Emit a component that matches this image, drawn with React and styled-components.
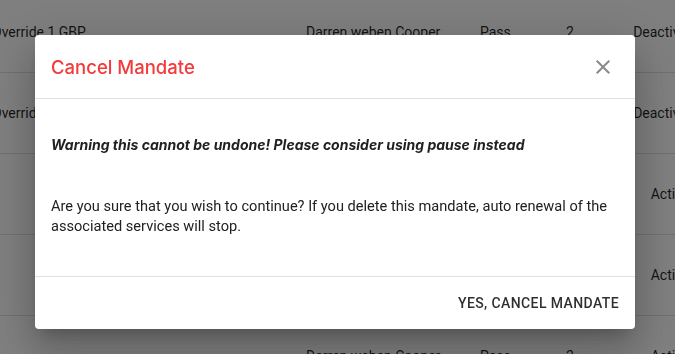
import React from "react";
import styled, { createGlobalStyle } from "styled-components";

const Global = createGlobalStyle`
  html, body {
    margin: 0;
    padding: 0;
    overflow: hidden;
    background: #fff;
  }
  body {
    width: 675px;
    height: 354px;
    font-family: Roboto, "Liberation Sans", sans-serif;
  }
`;

const Table = styled.div`
  margin: -8px 0 0 -8px;
  width: 740px;
`;

const Row = styled.div`
  display: grid;
  grid-template-columns: 314px 174px 86px 50px 108px;
  align-items: center;
  height: 80px;
  border-bottom: 1px solid #e0e0e0;
  font-size: 14px;
  color: rgba(0, 0, 0, 0.87);
`;

const Cell = styled.div`
  white-space: nowrap;
  text-align: ${(p) => (p.$center ? "center" : "left")};
`;

const Overlay = styled.div`
  position: fixed;
  inset: 0;
  background: rgba(0, 0, 0, 0.5);
  display: flex;
  align-items: flex-start;
  justify-content: center;
  padding: 35px 5px 0 0;
`;

const Dialog = styled.div`
  width: 600px;
  background: #fff;
  border-radius: 4px;
  box-shadow: 0px 11px 15px -7px rgba(0, 0, 0, 0.2),
    0px 24px 38px 3px rgba(0, 0, 0, 0.14), 0px 9px 46px 8px rgba(0, 0, 0, 0.12);
  display: flex;
  flex-direction: column;
`;

const Header = styled.div`
  display: flex;
  align-items: center;
  justify-content: space-between;
  height: 63px;
  padding: 0 20px 0 16px;
  border-bottom: 1px solid #e0e0e0;
`;

const Title = styled.h2`
  margin: 0;
  font-family: Inter, "Liberation Sans", sans-serif;
  font-size: 18.5px;
  font-weight: 500;
  color: #f43a3a;
`;

const CloseButton = styled.button`
  border: 0;
  background: none;
  padding: 0;
  width: 24px;
  height: 24px;
  display: flex;
  color: #8a8a8a;
  cursor: pointer;
`;

const Content = styled.div`
  padding: 36px 16px 40px;
  border-bottom: 1px solid #e0e0e0;
`;

const Warning = styled.p`
  margin: 0 0 41px;
  font-family: Inter, "Liberation Sans", sans-serif;
  font-size: 14px;
  font-weight: 700;
  font-style: italic;
  line-height: 20px;
  color: #212121;
`;

const Body = styled.p`
  margin: 0;
  font-size: 14.6px;
  line-height: 20px;
  color: #212121;
`;

const Actions = styled.div`
  display: flex;
  justify-content: flex-end;
  align-items: center;
  height: 52px;
  padding: 0 8px;
`;

const ActionButton = styled.button`
  border: 0;
  background: none;
  padding: 6px 8px;
  font-family: Roboto, "Liberation Sans", sans-serif;
  font-size: 14px;
  font-weight: 500;
  letter-spacing: 0.4px;
  text-transform: uppercase;
  color: rgba(0, 0, 0, 0.82);
  cursor: pointer;
`;

const rows = [
  ["Override 1 GBP", "Darren weben Cooper", "Pass", "2", "Deactivated"],
  ["Override 1 GBP", "", "", "", "Deactivated"],
  ["", "", "", "", "Active"],
  ["", "", "", "", "Active"],
  ["", "Darren weben Cooper", "Pass", "2", "Active"],
];

function CloseIcon() {
  return (
    <svg width="24" height="24" viewBox="0 0 24 24" fill="currentColor">
      <path d="M19 6.41L17.59 5 12 10.59 6.41 5 5 6.41 10.59 12 5 17.59 6.41 19 12 13.41 17.59 19 19 17.59 13.41 12z" />
    </svg>
  );
}

export default function App() {
  return (
    <>
      <Global />
      <Table>
        {rows.map((r, i) => (
          <Row key={i}>
            {r.map((c, j) => (
              <Cell key={j} $center={j === 4}>
                {c}
              </Cell>
            ))}
          </Row>
        ))}
      </Table>
      <Overlay>
        <Dialog>
          <Header>
            <Title>Cancel Mandate</Title>
            <CloseButton aria-label="close">
              <CloseIcon />
            </CloseButton>
          </Header>
          <Content>
            <Warning>
              Warning this cannot be undone! Please consider using pause instead
            </Warning>
            <Body>
              Are you sure that you wish to continue? If you delete this mandate,
              auto renewal of the associated services will stop.
            </Body>
          </Content>
          <Actions>
            <ActionButton>Yes, cancel mandate</ActionButton>
          </Actions>
        </Dialog>
      </Overlay>
    </>
  );
}
